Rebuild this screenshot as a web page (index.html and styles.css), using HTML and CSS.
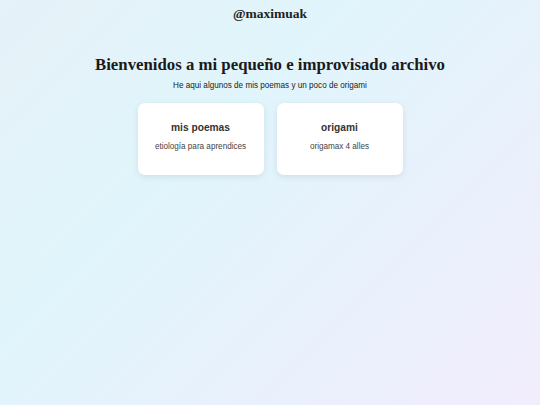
FILE: index.html
```html
<!DOCTYPE html>
<html lang="es">
<head>
<meta charset="utf-8">
<title>@maximuak</title>
<link rel="stylesheet" href="styles.css">
</head>
<body>
<header class="site-header">@maximuak</header>
<main class="main">
  <h1 class="title">Bienvenidos a mi pequeño e improvisado archivo</h1>
  <p class="subtitle">He aqui algunos de mis poemas y un poco de origami</p>
  <div class="cards">
    <a class="card" href="#">
      <span class="card-title">mis poemas</span>
      <span class="card-text">etiología para aprendices</span>
    </a>
    <a class="card" href="#">
      <span class="card-title">origami</span>
      <span class="card-text">origamax 4 alles</span>
    </a>
  </div>
</main>
</body>
</html>
```
FILE: styles.css
```css
html, body {
  margin: 0;
  padding: 0;
}
body {
  min-height: 405px;
  background: linear-gradient(135deg, #e6f1f8 0%, #e0f5fb 35%, #e8f1fc 65%, #f2edfc 100%);
  color: #222;
  font-family: "Liberation Sans", Arial, sans-serif;
}
.site-header {
  padding-top: 5px;
  text-align: center;
  font-family: "Liberation Serif", "Times New Roman", serif;
  font-weight: bold;
  font-size: 13.5px;
  line-height: 18px;
  color: #222;
}
.main {
  display: flex;
  flex-direction: column;
  align-items: center;
  padding-top: 32px;
}
.title {
  margin: 0;
  font-family: "Liberation Serif", "Times New Roman", serif;
  font-weight: bold;
  font-size: 16.8px;
  line-height: 20px;
  color: #1a1a1a;
}
.subtitle {
  margin: 6px 0 0;
  font-size: 8.15px;
  line-height: 10px;
  color: #222;
}
.cards {
  display: flex;
  gap: 13px;
  margin-top: 12px;
}
.card {
  box-sizing: border-box;
  width: 126px;
  height: 72px;
  padding-top: 19px;
  display: flex;
  flex-direction: column;
  align-items: center;
  background: #fff;
  border-radius: 7px;
  box-shadow: 0 2px 6px rgba(60, 80, 120, 0.12);
  text-decoration: none;
  color: #333;
}
.card-title {
  font-weight: bold;
  font-size: 10.2px;
  line-height: 12px;
  color: #333;
}
.card-text {
  margin-top: 8px;
  font-size: 8.15px;
  line-height: 10px;
  color: #444;
}
```
